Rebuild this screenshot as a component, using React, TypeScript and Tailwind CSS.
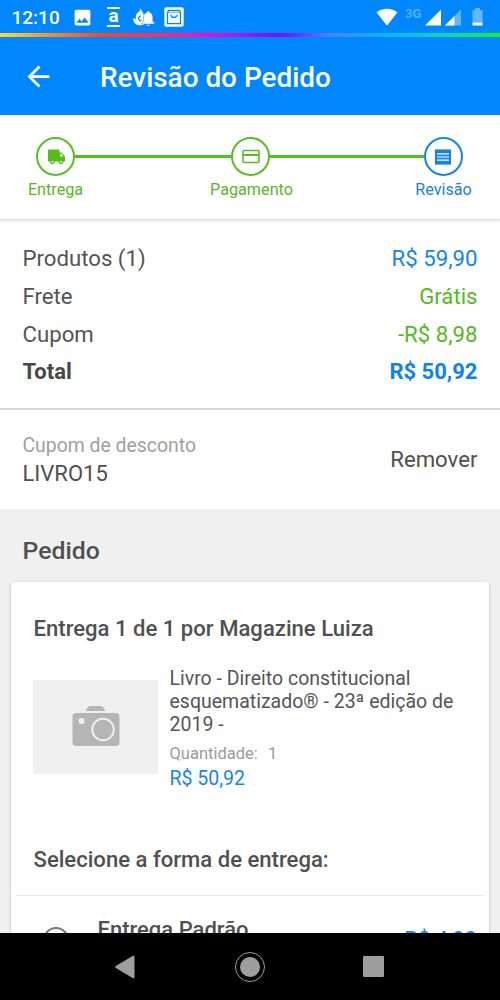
import type { ReactNode } from "react";
import { MdArrowBack, MdImage } from "react-icons/md";

const SUMMARY = [
  { label: "Produtos (1)", value: "R$ 59,90", color: "text-[#1683ee]" },
  { label: "Frete", value: "Grátis", color: "text-[#56b91d]" },
  { label: "Cupom", value: "-R$ 8,98", color: "text-[#56b91d]" },
];

function StatusBar() {
  return (
    <div className="h-[33px] shrink-0 flex items-center justify-between text-white pl-[11.500px] pr-[17px] pt-px">
      <div className="flex items-center">
        <span className="w-[60.500px] pt-px text-[19px] font-medium leading-none">12:10</span>
        <MdImage className="w-[21px] h-[21px]" />
        <div className="ml-[14px] w-[13px] h-5 border-y-2 border-white flex items-center justify-center text-[19px] font-bold leading-none pb-[3px]">
          a
        </div>
        <svg className="ml-[13px]" width="22" height="20" viewBox="0 0 22 20" fill="white">
          <path d="M7.500 1c.5 3 3.500 4.500 3.500 8v8.500c-2 1-5 1-7 .2C1 16.500-.3 13.500.5 11l3 1.500C2 9 3 7 5 5.500 6.500 4.500 7.500 3 7.500 1z" />
          <path d="M7.500 8.500C4.500 11 5 13 8.500 14" fill="none" stroke="#0086ff" strokeWidth="1.400" />
          <path
            d="M15.200 4c.8 0 1.300.5 1.300 1.300 2.200.7 3.300 2.500 3.300 4.700v4.200l1.900 1.800v1H8.700v-1l1.900-1.800V10c0-2.200 1.100-4 3.300-4.700 0-.8.5-1.300 1.300-1.300z"
            stroke="#0086ff"
            strokeWidth=".5"
          />
          <path d="M13.600 17.700h3.200c-.3 1.400-2.900 1.400-3.200 0z" />
        </svg>
        <svg className="ml-[9px]" width="20" height="20" viewBox="0 0 20 20">
          <rect x=".3" y=".3" width="19.400" height="19.400" rx="2" fill="white" />
          <path d="M4.500 3.500h11l1 2.200v11h-13v-11z" fill="none" stroke="#0086ff" strokeWidth="1.300" />
          <path d="M3.500 5.700h13" stroke="#0086ff" strokeWidth=".6" />
          <path d="M6.800 7.800c.5 3.500 5.900 3.500 6.400 0" fill="none" stroke="#0086ff" strokeWidth="1.200" />
        </svg>
      </div>
      <div className="flex items-center">
        <svg width="22" height="18" viewBox="0 0 22 18" fill="white">
          <path d="M.5 4.300C6.500-.6 15.500-.6 21.500 4.300L12 16.500q-1 1.200-2 0z" />
        </svg>
        <span className="ml-[7px] w-[19px] -mt-[7px] text-[13px] font-bold leading-none text-[#54b0ff]">3G</span>
        <svg className="ml-px" width="17" height="17" viewBox="0 0 17 17" fill="white">
          <path d="M16 .5v16H0z" />
        </svg>
        <svg className="ml-[3px]" width="17" height="17" viewBox="0 0 17 17">
          <path d="M16 .5v16H0z" fill="#66b6ff" />
          <path d="M9.500 7v9.500H0z" fill="white" />
        </svg>
        <svg className="ml-[10px]" width="11" height="18" viewBox="0 0 11 18">
          <path d="M3 0h5v2h2.500v12.500H.5V2H3z" fill="#66b6ff" />
          <path d="M.5 14.500h10v3H.5z" fill="white" />
        </svg>
      </div>
    </div>
  );
}

function StepCircle({ active = false, children }: { active?: boolean; children: ReactNode }) {
  return (
    <div
      className={`w-[39px] h-[39px] shrink-0 rounded-full border-2 flex items-center justify-center ${
        active ? "border-[#1683e8]" : "border-[#5bbd25]"
      }`}
    >
      {children}
    </div>
  );
}

function Steps() {
  return (
    <div className="h-[105px] shrink-0 bg-white pt-[22px] border-b border-[#dedede] shadow-[0_1px_3px_rgba(0,0,0,0.12)] relative">
      <div className="flex items-center pl-[36px] pr-[37.500px]">
        <StepCircle>
          <svg className="ml-[2px]" width="19" height="16" viewBox="0 0 19 16" fill="#52bd1b">
            <path d="M2 .5h9.500q1 0 1 1V3.500h2.200l3.300 4.300V12.500h-1.600a2.500 2.500 0 0 1-4.800 0H7.900a2.500 2.500 0 0 1-4.800 0H1V1.500q0-1 1-1z" />
            <path d="M13.300 4.700h1l2 2.800h-3z" fill="white" />
            <circle cx="5.500" cy="12.800" r="2.400" />
            <circle cx="14" cy="12.800" r="2.400" />
            <circle cx="5.500" cy="12.800" r="1" fill="white" />
            <circle cx="14" cy="12.800" r="1" fill="white" />
          </svg>
        </StepCircle>
        <div className="w-[156px] h-[3px] bg-[#56bf20]" />
        <StepCircle>
          <svg width="18" height="15" viewBox="0 0 18 15" fill="none" stroke="#5bbd25">
            <rect x="1" y="1.500" width="16" height="12" rx="1" strokeWidth="1.600" />
            <path d="M1 6h16" strokeWidth="2" />
          </svg>
        </StepCircle>
        <div className="flex-1 h-[3px] bg-[#56bf20]" />
        <StepCircle active>
          <svg className="-ml-px" width="16" height="16" viewBox="0 0 16 16" fill="#1683e8">
            <path d="M0 0l1 .7L2 0l1 .7L4 0l1 .7L6 0l1 .7L8 0l1 .7L10 0l1 .7L12 0l1 .7L14 0l1 .7L16 0v16l-1-.7-1 .7-1-.7-1 .7-1-.7-1 .7-1-.7-1 .7-1-.7-1 .7-1-.7-1 .7-1-.7-1 .7-1-.7-1 .7z" />
            <path d="M2 4.800h12M2 8h12M2 11.200h12" stroke="white" strokeWidth="1.200" />
          </svg>
        </StepCircle>
      </div>
      <div className="flex text-[16.200px] leading-[24px] pt-[1.500px] text-[#5bb52a] whitespace-nowrap">
        <span className="ml-[15px] w-[81px] text-center">Entrega</span>
        <span className="ml-[105px] w-[101px] text-center">Pagamento</span>
        <span className="ml-[101px] w-[81px] text-center text-[#1c7fda]">Revisão</span>
      </div>
    </div>
  );
}

function Summary() {
  return (
    <div className="h-[190px] shrink-0 bg-white px-[22.500px] pt-[19px] border-b-2 border-[#d6d6d6] text-[22.200px] text-[#545454]">
      {SUMMARY.map((row) => (
        <div key={row.label} className="h-[38px] flex items-center justify-between leading-[22px]">
          <span>{row.label}</span>
          <span className={row.color}>{row.value}</span>
        </div>
      ))}
      <div className="h-[38px] flex items-center justify-between leading-[22px] text-[22px] font-bold">
        <span className="text-[#484848]">Total</span>
        <span className="text-[#0b82f5]">R$ 50,92</span>
      </div>
    </div>
  );
}

function Coupon() {
  return (
    <div className="h-[99px] shrink-0 bg-white px-[22.500px] flex items-center justify-between text-[22.200px] text-[#4f4f4f]">
      <div className="pt-px">
        <p className="text-[19.400px] leading-[28px] text-[#a0a0a0]">Cupom de desconto</p>
        <p className="leading-[28px] text-[22px]">LIVRO15</p>
      </div>
      <span>Remover</span>
    </div>
  );
}

function Product() {
  return (
    <div className="flex mt-[25px] pl-[22px] pr-3">
      <div className="mt-[13px] w-[125px] h-[94px] shrink-0 bg-[#f0f0f0] flex items-center justify-center">
        <svg className="-mt-[2px]" width="48" height="42" viewBox="0 0 48 42">
          <path d="M14 6q1-5 5-5h9q4 0 5 5z" fill="#b5b5b5" />
          <rect x=".5" y="8" width="47" height="33" rx="4" fill="#b5b5b5" />
          <circle cx="9.500" cy="16" r="3" fill="#f0f0f0" />
          <circle cx="31" cy="24.500" r="10.800" fill="#b5b5b5" stroke="#f0f0f0" strokeWidth="2" />
        </svg>
      </div>
      <div className="ml-[11.500px] text-[#555]">
        <p className="text-[19.500px] leading-[23px]">
          Livro - Direito constitucional
          <br />
          esquematizado® - 23ª edição de
          <br />
          2019 -
        </p>
        <p className="mt-[6px] text-[16.500px] leading-[24px] text-[#9b9b9b] whitespace-pre">
          {"Quantidade:  "}
          <span className="ml-0.5">1</span>
        </p>
        <p className="text-[19.500px] leading-[25px] text-[#1683ee]">R$ 50,92</p>
      </div>
    </div>
  );
}

function OrderCard() {
  return (
    <div className="mx-[11px] h-[420px] shrink-0 bg-white rounded-[3px] shadow-[0_1px_3px_rgba(0,0,0,0.28)] text-[#505050]">
      <h3 className="pt-[32px] pl-[22.500px] text-[22.100px] leading-[28px] font-medium">
        Entrega 1 de 1 por Magazine Luiza
      </h3>
      <Product />
      <h3 className="mt-[54px] pl-[22.500px] text-[22.100px] leading-[28px] font-medium">Selecione a forma de entrega:</h3>
      <div className="mt-[22px] mx-[4px] border-t border-[#ebebeb] flex items-start">
        <div className="mt-[31px] ml-[28px] w-[26px] h-[26px] rounded-full border-2 border-[#777]" />
        <span className="mt-[20px] ml-[28.500px] text-[22px] leading-[28px] font-medium">Entrega Padrão</span>
        <span className="mt-[31px] ml-auto mr-[8px] text-[22px] leading-[26px] text-[#0b82f5]">R$ 4,99</span>
      </div>
    </div>
  );
}

function NavBar() {
  return (
    <div className="h-[67px] shrink-0 bg-black flex items-center pl-[115px]">
      <svg width="20" height="24" viewBox="0 0 20 24" fill="#9e9e9e">
        <path d="M18 .8q1.500-.6 1.500 1v20.400q0 1.600-1.500 1L.8 13q-1.200-1 0-2z" />
      </svg>
      <div className="ml-[100px] w-[30px] h-[30px] rounded-full border border-[#9e9e9e] flex items-center justify-center">
        <div className="w-[20px] h-[20px] rounded-full bg-[#9e9e9e]" />
      </div>
      <div className="ml-[98px] w-[21px] h-[21px] rounded-[1px] bg-[#9e9e9e]" />
    </div>
  );
}

export default function App() {
  return (
    <div className="w-[500px] h-[1000px] overflow-hidden flex flex-col bg-[#0086ff] font-['Roboto',sans-serif]">
      <StatusBar />
      <div className="h-1 shrink-0 bg-[linear-gradient(90deg,#f8dc3c_0%,#f08a28_11%,#f04c28_20%,#f4306c_32%,#f010c0_41%,#a018f0_49%,#7010ff_56%,#5080ff_66%,#08b4fa_77%,#10d4b0_89%,#14f028_100%)]" />
      <header className="h-[78px] shrink-0 flex items-center text-white">
        <MdArrowBack className="ml-[22px] w-[33px] h-[33px]" />
        <h1 className="ml-[45px] pt-1 text-[27.900px] font-medium leading-none">Revisão do Pedido</h1>
      </header>
      <main className="flex-1 min-h-0 overflow-hidden flex flex-col bg-[#f0f0f0]">
        <Steps />
        <Summary />
        <Coupon />
        <h2 className="h-[73px] shrink-0 pl-[22.500px] pt-[27px] text-[24.800px] leading-[30px] font-medium text-[#505050]">
          Pedido
        </h2>
        <OrderCard />
      </main>
      <NavBar />
    </div>
  );
}
